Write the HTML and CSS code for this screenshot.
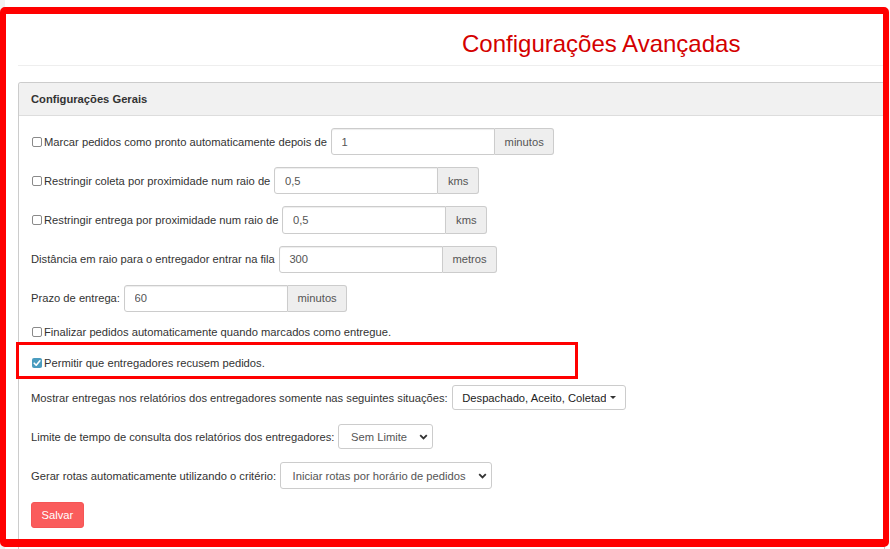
FILE: index.html
```html
<!DOCTYPE html>
<html lang="pt-BR">
<head>
<meta charset="utf-8">
<title>Configurações Avançadas</title>
<link rel="stylesheet" href="styles.css">
</head>
<body>
<div class="frame"></div>
<div class="layout">
  <aside class="sidebar"></aside>
  <main class="main">
    <h2 class="title">Configurações Avançadas</h2>
    <hr class="divider">
    <section class="panel">
      <div class="panel-heading">Configurações Gerais</div>
      <div class="panel-body">
        <div class="row">
          <label class="lbl"><span class="cb"></span>Marcar pedidos como pronto automaticamente depois de</label>
          <div class="igroup"><input class="input" type="text" value="1"><span class="addon">minutos</span></div>
        </div>
        <div class="row">
          <label class="lbl"><span class="cb"></span>Restringir coleta por proximidade num raio de</label>
          <div class="igroup"><input class="input" type="text" value="0,5"><span class="addon">kms</span></div>
        </div>
        <div class="row">
          <label class="lbl"><span class="cb"></span>Restringir entrega por proximidade num raio de</label>
          <div class="igroup"><input class="input" type="text" value="0,5"><span class="addon">kms</span></div>
        </div>
        <div class="row">
          <label class="lbl">Distância em raio para o entregador entrar na fila</label>
          <div class="igroup"><input class="input" type="text" value="300"><span class="addon">metros</span></div>
        </div>
        <div class="row">
          <label class="lbl">Prazo de entrega:</label>
          <div class="igroup"><input class="input" type="text" value="60"><span class="addon">minutos</span></div>
        </div>
        <div class="check-row">
          <label class="lbl"><span class="cb"></span>Finalizar pedidos automaticamente quando marcados como entregue.</label>
        </div>
        <div class="highlight">
          <label class="lbl"><span class="cb checked"><svg viewBox="0 0 10 10" width="10" height="10"><path d="M2.2 5.2 L4.2 7.2 L7.9 2.8" fill="none" stroke="#fff" stroke-width="1.6" stroke-linecap="round" stroke-linejoin="round"/></svg></span>Permitir que entregadores recusem pedidos.</label>
        </div>
        <div class="row2">
          <label class="lbl">Mostrar entregas nos relatórios dos entregadores somente nas seguintes situações:</label>
          <div class="dropdown"><span class="dd-text">Despachado, Aceito, Coletado</span><span class="caret"></span></div>
        </div>
        <div class="row2">
          <label class="lbl">Limite de tempo de consulta dos relatórios dos entregadores:</label>
          <div class="select sel-limit"><span>Sem Limite</span><svg class="chev" viewBox="0 0 9 6" width="9" height="6"><path d="M1.2 1.2 L4.5 4.5 L7.8 1.2" fill="none" stroke="#333" stroke-width="1.8"/></svg></div>
        </div>
        <div class="row2">
          <label class="lbl">Gerar rotas automaticamente utilizando o critério:</label>
          <div class="select sel-rotas"><span>Iniciar rotas por horário de pedidos</span><svg class="chev" viewBox="0 0 9 6" width="9" height="6"><path d="M1.2 1.2 L4.5 4.5 L7.8 1.2" fill="none" stroke="#333" stroke-width="1.8"/></svg></div>
        </div>
        <button class="btn-save" type="button">Salvar</button>
      </div>
    </section>
  </main>
</div>
</body>
</html>
```
FILE: styles.css
```css
html, body {
  margin: 0;
  padding: 0;
}
body {
  font-family: "Liberation Sans", Arial, sans-serif;
  font-size: 11.2px;
  color: #333;
  background: #fff;
  overflow: hidden;
  height: 549px;
}
.frame {
  position: absolute;
  left: 0;
  top: 7px;
  width: 889px;
  height: 540px;
  box-sizing: border-box;
  border-style: solid;
  border-color: #ff0000;
  border-width: 7px 6px 8px 6px;
  border-radius: 5px;
  pointer-events: none;
  z-index: 10;
}
.layout {
  display: flex;
  min-height: 549px;
}
.sidebar {
  width: 5px;
  flex: none;
  background: #f2f2f2;
}
.main {
  flex: 1;
  min-width: 0;
  padding: 0 5px 0 13px;
}
.title {
  margin: 0 0 8px 444px;
  padding-top: 30px;
  height: 27px;
  line-height: 27px;
  font-size: 24px;
  font-weight: normal;
  color: #d40000;
  white-space: nowrap;
}
.divider {
  margin: 0;
  border: 0;
  border-top: 1px solid #eee;
  height: 0;
}
.panel {
  margin-top: 16px;
  border: 1px solid #ccc;
  border-bottom: 0;
  border-radius: 3px 3px 0 0;
  min-height: 480px;
}
.panel-heading {
  background: #f1f1f1;
  border-bottom: 1px solid #ddd;
  padding: 8px 12px;
  line-height: 16px;
  font-weight: bold;
  border-radius: 3px 3px 0 0;
}
.panel-body {
  padding: 12px;
}
.row {
  display: flex;
  align-items: center;
  height: 27.2px;
  margin-bottom: 12px;
}
.lbl {
  display: flex;
  align-items: center;
  margin-right: 4px;
  white-space: nowrap;
  line-height: 16px;
}
.cb {
  width: 10px;
  height: 10px;
  box-sizing: border-box;
  border: 1px solid #8a8a8a;
  border-radius: 2px;
  margin: 0 2px 0 1px;
  background: #fff;
  flex: none;
  display: block;
}
.cb.checked {
  border: 0;
  background: #4a9cbf;
}
.cb svg {
  display: block;
}
.igroup {
  display: flex;
  height: 27.2px;
}
.input {
  width: 164px;
  height: 100%;
  box-sizing: border-box;
  margin: 0;
  border: 1px solid #ccc;
  border-radius: 3px 0 0 3px;
  padding: 0 9.6px;
  font-family: inherit;
  font-size: 11.2px;
  color: #555;
  background: #fff;
  box-shadow: inset 0 1px 1px rgba(0, 0, 0, 0.075);
  outline: none;
}
.addon {
  display: flex;
  align-items: center;
  padding: 0 9.6px;
  background: #eee;
  border: 1px solid #ccc;
  border-left: 0;
  border-radius: 0 3px 3px 0;
  color: #555;
}
.check-row {
  height: 16px;
  display: flex;
  align-items: center;
  margin-bottom: 2px;
}
.highlight {
  margin-left: -15px;
  width: 562px;
  box-sizing: border-box;
  border: 3px solid #ff0000;
  padding: 10px 0 5px 12px;
  margin-bottom: 6px;
}
.row2 {
  display: flex;
  align-items: center;
  height: 26px;
  margin-bottom: 13px;
}
.dropdown {
  display: flex;
  align-items: center;
  width: 174px;
  height: 25px;
  box-sizing: border-box;
  border: 1px solid #ccc;
  border-radius: 3px;
  padding: 0 9.6px;
  background: #fff;
  color: #222;
}
.dd-text {
  width: 144px;
  overflow: hidden;
  white-space: nowrap;
  flex: none;
}
.caret {
  width: 0;
  height: 0;
  border-top: 3.2px solid #333;
  border-left: 3.2px solid transparent;
  border-right: 3.2px solid transparent;
  margin-left: 4px;
}
.select {
  display: flex;
  align-items: center;
  justify-content: space-between;
  box-sizing: border-box;
  border: 1px solid #ccc;
  border-radius: 3px;
  padding: 0 4px 0 11.6px;
  background: #fff;
  color: #555;
  white-space: nowrap;
}
.sel-limit {
  width: 95px;
  height: 25px;
}
.sel-rotas {
  width: 212px;
  height: 27px;
}
.chev {
  display: block;
  flex: none;
}
.btn-save {
  display: block;
  height: 26px;
  margin: 0;
  padding: 0 9.6px;
  background: #fa5c5c;
  color: #fff;
  border: 1px solid #f55555;
  border-radius: 3px;
  font-family: inherit;
  font-size: 11.2px;
}
```
